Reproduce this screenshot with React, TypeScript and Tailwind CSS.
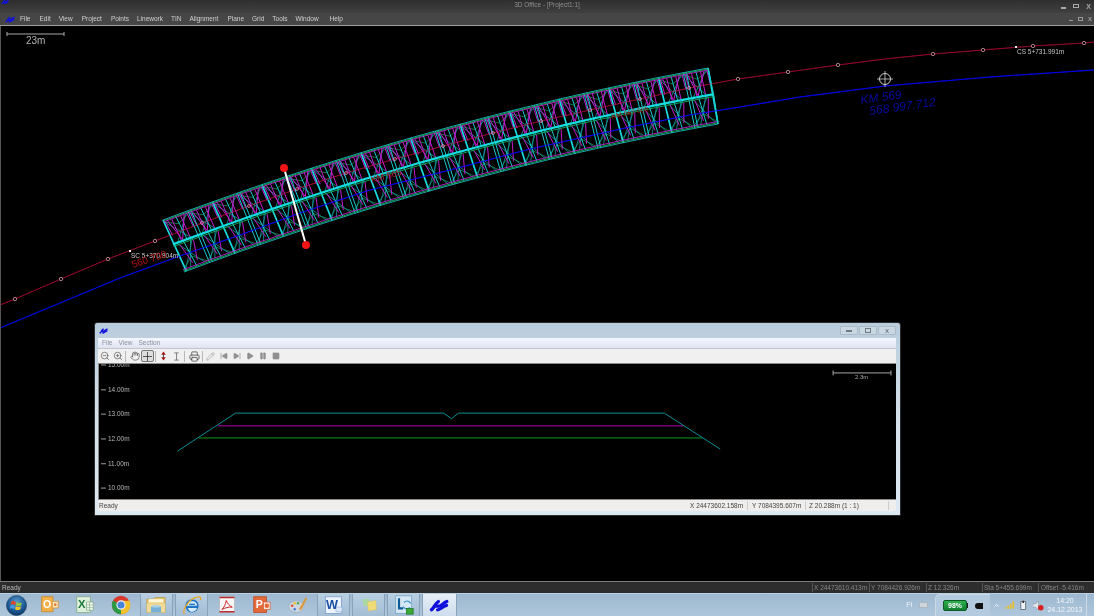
import React from "react";
import { ZoomIn, ZoomOut, Hand, Printer, Pencil, SkipBack, SkipForward, Play, Pause, Square, ChevronUp } from "lucide-react";

type P = [number, number];
const quad = (a: P, c: P, b: P, s: number): P => {
  const u = 1 - s;
  return [u * u * a[0] + 2 * u * s * c[0] + s * s * b[0], u * u * a[1] + 2 * u * s * c[1] + s * s * b[1]];
};
const meshPt = (s: number, t: number): P => {
  const a = quad([163, 220], [435, 118], [708, 68], s);
  const b = quad([184, 272], [451, 172], [718, 124], s);
  return [a[0] + (b[0] - a[0]) * t, a[1] + (b[1] - a[1]) * t];
};
const N = 22;
const SP = 0.47;
const seg = (s1: number, t1: number, s2: number, t2: number) => {
  const a = meshPt(Math.min(s1, N) / N, t1);
  const b = meshPt(Math.min(s2, N) / N, t2);
  return `M${a[0].toFixed(1)} ${a[1].toFixed(1)}L${b[0].toFixed(1)} ${b[1].toFixed(1)}`;
};
const longi = (t: number) => {
  let d = "";
  for (let i = 0; i < N; i++) d += seg(i, t, i + 1, t);
  return d;
};
let major = "", thin = "", diag = "", mg = "", gr = "";
for (let i = 0; i <= N; i++) {
  if (i % 2 === 0) major += seg(i, 0, i + 0.1, 1);
  else thin += seg(i, 0, i + 0.05, 1) + seg(i + 0.12, 0, i + 0.17, 1);
  if (i === N) continue;
  thin += seg(i + 0.5, 0.02, i + 0.58, SP) + seg(i + 0.42, SP, i + 0.55, 0.98);
  diag += seg(i, 0.03, i + 0.75, SP) + seg(i + 0.9, 0.03, i + 0.2, SP);
  diag += seg(i + 0.15, SP, i + 0.9, 0.97) + seg(i + 0.8, SP, i + 0.1, 0.97);
  diag += seg(i + 0.3, 0.97, i + 0.72, SP);
  mg += seg(i + 0.15, 0.04, i + 0.42, SP - 0.02) + seg(i + 0.82, 0.04, i + 0.42, SP - 0.02);
  mg += seg(i + 0.32, 0.04, i + 0.36, SP - 0.02) + seg(i + 0.68, 0.04, i + 0.72, SP - 0.02);
  mg += seg(i + 0.06, 0.04, i + 0.12, 0.32) + seg(i + 0.94, 0.04, i + 0.98, 0.3);
  mg += seg(i + 0.25, SP + 0.05, i + 0.45, 0.9) + seg(i + 0.8, SP + 0.05, i + 0.65, 0.88);
  gr += seg(i, 0.96, i + 0.5, 0.78) + seg(i + 1, 0.96, i + 0.5, 0.78);
  gr += seg(i, 0.04, i + 0.5, 0.16) + seg(i + 1, 0.04, i + 0.5, 0.16);
}
const cyanEdges = [0, 1].map(longi).join("");
const magentaEdges = [0.035, 0.955].map(longi).join("");
const greenEdges = [0.018, SP + 0.04, 0.98].map(longi).join("");
const spine = longi(SP);

const redPts: P[] = [[15, 299], [61, 279], [108, 259], [155, 241], [202, 223], [249, 206], [297, 189], [346, 173], [395, 159], [443, 146], [493, 133], [541, 121], [590, 110], [640, 99], [689, 88], [738, 79], [788, 72], [838, 65], [885, 59], [933, 54], [983, 50], [1033, 46], [1084, 43]];
const redLine = "M0 305L" + redPts.map((p) => p.join(" ")).join("L") + "L1094 42";
const redMarks = redPts.filter((p) => p[0] < 165 || p[0] > 730).filter((p) => p[0] !== 885);
const innerMarks = redPts.filter((p) => p[0] > 200 && p[0] < 700);
const blueLine = "M0 328L60 303L120 278L177 257L240 235L300 213L370 190L450 170L530 149L630 127L690 115L740 107L800 97L885 86L990 77L1094 70";

function Logo({ className = "w-[14px] h-[9px]" }: { className?: string }) {
  return (
    <svg viewBox="0 0 28 18" className={className} fill="none" stroke="#1010dc" strokeWidth="4.6" strokeLinecap="round" strokeLinejoin="round">
      <path d="M3.5 15C7 13 8.5 6 13 3.5" />
      <path d="M9 10H14C17 10 20 5.5 25 3.5" />
      <path d="M12 15C16 15 18.5 10.5 24.5 9" />
    </svg>
  );
}

function Orb() {
  return (
    <svg viewBox="0 0 24 24" className="w-[21px] h-[21px]">
      <defs>
        <radialGradient id="orb" cx="50%" cy="35%" r="70%">
          <stop offset="0" stopColor="#5f9fd2" />
          <stop offset="0.6" stopColor="#1c5a94" />
          <stop offset="1" stopColor="#0b2f5a" />
        </radialGradient>
      </defs>
      <circle cx="12" cy="12" r="11.5" fill="url(#orb)" stroke="#17365a" strokeWidth="0.6" />
      <path d="M6 7.5C8 6.5 9.5 7 11.3 8L10.5 11.6C8.8 10.7 7.2 10.3 5.3 11Z" fill="#e0482a" />
      <path d="M12.2 8.3C14.2 9.3 16 9.5 18 8.6L17.2 12.2C15.2 13 13.2 12.7 11.4 11.9Z" fill="#8fc63f" />
      <path d="M5.1 11.9C7 11.2 8.6 11.6 10.3 12.5L9.5 16.1C7.7 15.2 6.1 14.9 4.3 15.6Z" fill="#3f9be0" />
      <path d="M11.2 12.9C13 13.7 15 13.9 17 13.1L16.2 16.7C14.2 17.5 12.2 17.2 10.4 16.5Z" fill="#f7c325" />
    </svg>
  );
}
function Outlook() {
  return (
    <svg viewBox="0 0 24 24" className="w-[18px] h-[18px]">
      <rect x="1" y="1" width="15" height="20" fill="#f4b14a" stroke="#c9801a" />
      <path d="M15 7H23V16H15Z" fill="#fbe6bd" stroke="#d08a2a" />
      <circle cx="19" cy="11.5" r="1.8" fill="#e87a30" />
      <text x="2.5" y="16.5" fontSize="14" fontWeight="700" fill="#fff" fontFamily="Liberation Sans">O</text>
    </svg>
  );
}
function Excel() {
  return (
    <svg viewBox="0 0 24 24" className="w-[18px] h-[18px]">
      <rect x="1" y="1" width="18" height="21" fill="#dfeedd" stroke="#7da880" />
      <path d="M14 8H23V19H14Z" fill="#f4faf2" stroke="#7da880" />
      <path d="M14 12H23M14 15.5H23M18 8V19" stroke="#7da880" strokeWidth="0.8" />
      <text x="2.5" y="16" fontSize="15" fontWeight="700" fill="#1c7a3a" fontFamily="Liberation Sans">X</text>
    </svg>
  );
}
function Chrome() {
  return (
    <svg viewBox="0 0 24 24" className="w-[20px] h-[20px]">
      <circle cx="12" cy="12" r="11" fill="#d8392c" />
      <path d="M12 12L2.5 6.5A11 11 0 0 0 12 23Z" fill="#2a9a46" />
      <path d="M12 12L12 23A11 11 0 0 0 21.5 6.5Z" fill="#f2c22a" />
      <path d="M12 7H22A11 11 0 0 1 17 21.8L12 12Z" fill="#f2c22a" />
      <circle cx="12" cy="12" r="5.6" fill="#f4f4f4" />
      <circle cx="12" cy="12" r="4.3" fill="#4a84d8" />
    </svg>
  );
}
function Folder() {
  return (
    <svg viewBox="0 0 24 24" className="w-[20px] h-[20px]">
      <path d="M1 5H9L11 3H23V21H1Z" fill="#e0c36c" stroke="#b7953c" strokeWidth="0.8" />
      <rect x="3" y="5" width="18" height="4" fill="#fff6d8" />
      <path d="M1 10H23V21H1Z" fill="#efdb98" />
      <rect x="6" y="14" width="12" height="7" fill="#76b0d8" />
      <rect x="8" y="12" width="8" height="3" fill="#a9d2ea" />
    </svg>
  );
}
function IE() {
  return (
    <svg viewBox="0 0 24 24" className="w-[20px] h-[20px]">
      <circle cx="12" cy="13" r="8" fill="#1f74c4" />
      <path d="M6 13H18C18 9 15.5 7.5 12 7.5C9 7.5 6.5 9.5 6 13Z" fill="#d7ecfb" />
      <rect x="8.6" y="10.4" width="7" height="1.6" fill="#1f74c4" />
      <path d="M7 15.5H18C17 19 14 20.5 11 20C9 19.5 7.5 17.5 7 15.5Z" fill="#d7ecfb" />
      <path d="M3 22C0 20 6 8 14 4C19 1.5 24 1 22 6" fill="none" stroke="#e8a820" strokeWidth="1.6" />
    </svg>
  );
}
function Acrobat() {
  return (
    <svg viewBox="0 0 24 24" className="w-[18px] h-[18px]">
      <rect x="2" y="1" width="20" height="21" fill="#f6f6f6" stroke="#b6b6b6" />
      <rect x="2" y="1" width="20" height="2" fill="#b92a2e" />
      <rect x="2" y="20" width="20" height="2" fill="#b92a2e" />
      <path d="M11 6C10 11 8 16 5 18C9 16 15 14 19 15C15 13 12 9 11 6Z" fill="none" stroke="#d02028" strokeWidth="1.3" />
    </svg>
  );
}
function Ppt() {
  return (
    <svg viewBox="0 0 24 24" className="w-[18px] h-[18px]">
      <rect x="1" y="1" width="17" height="21" fill="#e4693a" stroke="#b5471c" />
      <path d="M14 8H23V18H14Z" fill="#fbe3d6" stroke="#c96a40" />
      <circle cx="18.5" cy="13" r="3" fill="#e4693a" />
      <text x="3.5" y="16.5" fontSize="14" fontWeight="700" fill="#fff" fontFamily="Liberation Sans">P</text>
    </svg>
  );
}
function Palette() {
  return (
    <svg viewBox="0 0 24 24" className="w-[20px] h-[20px]">
      <ellipse cx="10" cy="14" rx="9" ry="7" fill="#cdd6de" stroke="#93a0ad" strokeWidth="0.6" />
      <circle cx="5" cy="13" r="1.5" fill="#e8483a" />
      <circle cx="8" cy="10" r="1.5" fill="#f0c030" />
      <circle cx="12" cy="10" r="1.5" fill="#4aa84a" />
      <circle cx="8" cy="17" r="1.5" fill="#3c7cd8" />
      <path d="M13 17L21 3L23 4L16 18Z" fill="#d89a40" />
    </svg>
  );
}
function Word() {
  return (
    <svg viewBox="0 0 24 24" className="w-[19px] h-[19px]">
      <rect x="2" y="1" width="20" height="21" fill="#eef4fb" stroke="#7e9dc9" />
      <path d="M15 14H23V20H15Z" fill="#dbe7f6" stroke="#7e9dc9" strokeWidth="0.6" />
      <text x="2.6" y="17" fontSize="16" fontWeight="700" fill="#1c4fa8" fontFamily="Liberation Sans">W</text>
    </svg>
  );
}
function Sticky() {
  return (
    <svg viewBox="0 0 24 24" className="w-[18px] h-[18px]">
      <path d="M3 5L12 3L14 12L5 14Z" fill="#a9d9a5" />
      <path d="M10 8L21 6L22 18L11 20Z" fill="#efdc78" stroke="#dcbf50" strokeWidth="0.5" />
    </svg>
  );
}
function Lync() {
  return (
    <svg viewBox="0 0 24 24" className="w-[20px] h-[20px]">
      <rect x="2" y="1" width="19" height="21" fill="#d6e8f5" stroke="#7ea4c4" />
      <path d="M6 4V16H11" fill="none" stroke="#0e5c96" strokeWidth="2.6" />
      <path d="M12 9C15 6 18 7 20 10M19 15C16 18 13 17 11 14" fill="none" stroke="#2f8fcc" strokeWidth="1.4" />
      <rect x="15" y="16" width="8" height="7" fill="#38a838" stroke="#1c6c1c" strokeWidth="0.8" />
    </svg>
  );
}

const tb = "flex items-center justify-center w-[35.4px] h-full";
const act = "flex items-center justify-center w-[33px] h-full border-x border-[#8aa2b9] bg-gradient-to-b from-[#b8cfe2] to-[#a3bdd4]";

function Ctl({ children }: { children: React.ReactNode }) {
  return <div className="w-[18px] h-[9px] border border-[#a9b9c8] rounded-[1px] flex items-center justify-center bg-[#c9d7e3]">{children}</div>;
}

const T = "flex items-center justify-center w-[13px] h-[13px]";
const Sep = () => <div className="w-px h-[11px] bg-[#b8b8b8] mx-[1px]" />;

export default function App() {
  return (
    <div className="w-[1094px] h-[616px] flex flex-col overflow-hidden bg-black blur-[0.3px] font-['Liberation_Sans',sans-serif]">
      {/* Title bar */}
      <div className="h-[13px] relative flex items-center justify-between bg-gradient-to-b from-[#2e2e2e] to-[#404040] shrink-0">
        <Logo className="w-[8px] h-[6px] -mt-[9px] ml-[1px]" />
        <div className="absolute left-0 right-0 text-center text-[6.5px] leading-[13px] text-[#8f8f8f] -mt-[4px]">3D Office - [Project1:1]</div>
        <div className="flex items-center gap-[7px] pr-[3px] text-[#a8a8a8]">
          <div className="w-[5px] h-[1.5px] bg-[#a8a8a8] mt-[3px]" />
          <div className="w-[6px] h-[4px] border border-[#a8a8a8] -mt-[1px]" />
          <div className="text-[7px] leading-none font-bold -mt-[1px]">X</div>
        </div>
      </div>
      {/* Menu bar */}
      <div className="h-[13px] flex items-center justify-between bg-[#464646] border-b border-[#a0a0a0] shrink-0">
        <div className="flex items-center text-[6.5px] text-[#d0d0d0] pl-[5px]">
          <Logo className="w-[10px] h-[7px] mr-[5px]" />
          <span className="mr-[9px]">File</span>
          <span className="mr-[8px]">Edit</span>
          <span className="mr-[9px]">View</span>
          <span className="mr-[9px]">Project</span>
          <span className="mr-[8px]">Points</span>
          <span className="mr-[8px]">Linework</span>
          <span className="mr-[8px]">TIN</span>
          <span className="mr-[9px]">Alignment</span>
          <span className="mr-[8px]">Plane</span>
          <span className="mr-[8px]">Grid</span>
          <span className="mr-[8px]">Tools</span>
          <span className="mr-[11px]">Window</span>
          <span>Help</span>
        </div>
        <div className="flex items-center gap-[5px] pr-[2px]">
          <div className="w-[4px] h-[1px] bg-[#9a9a9a] mt-[3px]" />
          <div className="w-[5px] h-[4px] border border-[#9a9a9a]" />
          <div className="text-[6px] leading-none font-bold text-[#a0a0a0]">X</div>
        </div>
      </div>
      {/* Canvas */}
      <div className="relative flex-1 bg-black border-l border-[#555] min-h-0">
        <svg viewBox="1 26 1093 555" className="w-full h-full block" preserveAspectRatio="none" fontFamily="Liberation Sans">
          {/* scale */}
          <path d="M7 34H64M7 32V36M64 32V36" stroke="#a8a8a8" strokeWidth="1" fill="none" />
          <text x="26" y="44" fontSize="10" fill="#b4b4b4">23m</text>
          {/* alignment */}
          <path d={blueLine} stroke="#0000c8" strokeWidth="1" fill="none" />
          <path d={redLine} stroke="#7a0018" strokeWidth="1" fill="none" />
          {/* mesh */}
          <path d={gr} stroke="#10905a" strokeWidth="0.8" fill="none" />
          <path d={diag} stroke="#129ca0" strokeWidth="0.8" fill="none" />
          <path d={mg} stroke="#c41ccc" strokeWidth="1" fill="none" />
          <path d={thin} stroke="#14ccd0" strokeWidth="1" fill="none" />
          <path d={major} stroke="#16dce0" strokeWidth="1.7" fill="none" />
          <path d={cyanEdges} stroke="#18d0d0" strokeWidth="0.8" fill="none" />
          <path d={magentaEdges} stroke="#c41ccc" strokeWidth="0.9" fill="none" />
          <path d={greenEdges} stroke="#14b060" strokeWidth="0.9" fill="none" />
          <path d={spine} stroke="#14dde0" strokeWidth="2.2" fill="none" />
          <path d="M708 68L714 97L718 124" stroke="#18d0d0" strokeWidth="1.2" fill="none" />
          <path d={blueLine} stroke="#0000e8" strokeWidth="1" fill="none" opacity="0.85" />
          <path d={redLine} stroke="#a01040" strokeWidth="0.8" fill="none" opacity="0.7" />
          {redMarks.map((p) => (
            <circle key={p[0]} cx={p[0]} cy={p[1]} r="1.7" fill="#000" stroke="#d09aa8" strokeWidth="0.8" />
          ))}
          {innerMarks.map((p) => (
            <circle key={p[0]} cx={p[0]} cy={p[1]} r="1.5" fill="none" stroke="#e0a8c8" strokeWidth="0.7" />
          ))}
          <rect x="129" y="250" width="2" height="2" fill="#eee" />
          <rect x="1015" y="46" width="2" height="2" fill="#eee" />
          {/* labels */}
          <text x="131" y="258" fontSize="6.5" fill="#c8c8c8">SC 5+370.804m</text>
          <text x="1017" y="54" fontSize="6.5" fill="#c8c8c8">CS 5+731.991m</text>
          <text x="133" y="268" fontSize="10" fill="#b01010" transform="rotate(-18 133 268)">560 700</text>
          <text x="372" y="183" fontSize="9" fill="#b01030" transform="rotate(-15 372 183)">KM 565</text>
          <text x="612" y="119" fontSize="7" fill="#b01010" transform="rotate(-12 612 119)">KM 567 000</text>
          <text x="861" y="104" fontSize="12" fontStyle="italic" fill="#0a0aa0" transform="rotate(-8 861 104)">KM 569</text>
          <text x="870" y="115" fontSize="12" fontStyle="italic" fill="#0a0aa0" transform="rotate(-8 870 115)">568 997.712</text>
          {/* crosshair */}
          <circle cx="885" cy="79" r="5.5" stroke="#d0d0d0" strokeWidth="1" fill="none" />
          <path d="M885 71V87M877 79H893" stroke="#d0d0d0" strokeWidth="0.8" />
          {/* section handle */}
          <path d="M284 168L306 245" stroke="#ffffff" strokeWidth="2" />
          <circle cx="284" cy="168" r="4" fill="#f01414" />
          <circle cx="306" cy="245" r="4" fill="#f01414" />
        </svg>

        {/* Floating section window */}
        <div className="absolute left-[93px] top-[296px] w-[807px] h-[194px] flex flex-col border border-[#2c2c2c] rounded-t-[3px] bg-gradient-to-b from-[#b9ccdc] via-[#d5e1eb] to-[#dce8f3] pl-[3px] pr-[4px] pb-[4px]">
          <div className="h-[15px] flex items-center justify-between shrink-0">
            <Logo className="w-[9px] h-[6px] ml-[1px]" />
            <div className="flex gap-[1px]">
              <Ctl><div className="w-[6px] h-[2px] bg-[#707a84]" /></Ctl>
              <Ctl><div className="w-[6px] h-[5px] border border-[#707a84]" /></Ctl>
              <Ctl><div className="text-[6px] leading-none font-bold text-[#707a84]">X</div></Ctl>
            </div>
          </div>
          <div className="h-[11px] flex items-center gap-[6px] pl-[4px] bg-gradient-to-b from-[#f5f7fd] to-[#dfe3f3] border-b border-[#c4c6cc] text-[6.5px] text-[#8c8fa0] shrink-0">
            <span>File</span>
            <span>View</span>
            <span>Section</span>
          </div>
          <div className="h-[15px] flex items-center bg-[#f0f0f0] shrink-0 border-b border-[#8a8a8a] text-[#4a4a4a]">
            <div className={T}><ZoomOut size={10} strokeWidth={1.5} /></div>
            <div className={T}><ZoomIn size={10} strokeWidth={1.5} /></div>
            <Sep />
            <div className={T + " ml-[1px]"}><Hand size={10} strokeWidth={1.5} /></div>
            <div className="flex items-center justify-center w-[13px] h-[12px] border border-[#777] rounded-[2px] bg-[#dedede]">
              <svg viewBox="0 0 10 10" className="w-[9px] h-[9px]"><path d="M5 0V10M0 5H10" stroke="#333" strokeWidth="0.9" /></svg>
            </div>
            <Sep />
            <div className={T}>
              <svg viewBox="0 0 10 10" className="w-[9px] h-[10px]"><path d="M5 1V9" stroke="#444" /><path d="M5 0L2.5 3.5H7.5ZM5 10L2.5 6.5H7.5Z" fill="#a01818" /></svg>
            </div>
            <div className={T}>
              <svg viewBox="0 0 10 10" className="w-[9px] h-[9px]"><path d="M2.5 1H7.5M5 1V9M2.5 9H7.5" stroke="#777" fill="none" /></svg>
            </div>
            <Sep />
            <div className={T + " ml-[2px]"}><Printer size={11} strokeWidth={1.7} /></div>
            <Sep />
            <div className="flex items-center text-[#a8a8a8]">
              <div className={T}><Pencil size={9} /></div>
              <div className={T}><SkipBack size={8} fill="#909090" className="text-[#909090]" /></div>
              <div className={T}><SkipForward size={8} fill="#909090" className="text-[#909090]" /></div>
              <div className={T}><Play size={8} fill="#909090" className="text-[#909090]" /></div>
              <div className={T}><Pause size={8} fill="#909090" className="text-[#909090]" /></div>
              <div className={T}><Square size={8} fill="#909090" className="text-[#909090]" /></div>
            </div>
          </div>
          <div className="flex-1 min-h-0 bg-black border-l border-b border-[#8a8a8a]">
            <svg viewBox="98 364 798 136" className="w-full h-full block" preserveAspectRatio="none" fontFamily="Liberation Sans">
              {[["14.00m", 390], ["13.00m", 414.5], ["12.00m", 439.5], ["11.00m", 464.5], ["10.00m", 489]].map(([l, y]) => (
                <g key={l as string}>
                  <path d={`M100 ${y}H105`} stroke="#a0a0a0" strokeWidth="1" />
                  <text x="107" y={(y as number) + 2.2} fontSize="6.5" fill="#b8b8b8">{l}</text>
                </g>
              ))}
              <path d="M100 365H105" stroke="#a0a0a0" strokeWidth="1" />
              <text x="107" y="367.5" fontSize="6.5" fill="#b8b8b8">15.00m</text>
              <path d="M198 438.5H702" stroke="#009a1a" strokeWidth="1" fill="none" />
              <path d="M216.7 426.3H683" stroke="#b000b0" strokeWidth="1" fill="none" />
              <path d="M176.7 451.7L234.7 413.5H443L451 419L458 413.5H664L720 449.7" stroke="#0a8f94" strokeWidth="1" fill="none" />
              <path d="M833 373H891M833 370.5V375.5M891 370.5V375.5" stroke="#a8a8a8" strokeWidth="1" fill="none" />
              <text x="855" y="379" fontSize="6" fill="#a8a8a8">2.3m</text>
            </svg>
          </div>
          <div className="h-[11px] flex items-center bg-[#f0eeec] text-[6.5px] text-[#444] shrink-0 pl-[1px]">
            <span className="w-[591px]">Ready</span>
            <span className="w-[58px] border-r border-[#ccc]">X 24473602.158m</span>
            <span className="w-[58px] pl-[4px] border-r border-[#ccc]">Y 7084395.607m</span>
            <span className="w-[83px] pl-[3px] border-r border-[#ccc]">Z 20.288m (1 : 1)</span>
          </div>
        </div>
      </div>
      {/* Main status bar */}
      <div className="h-[12px] flex items-center justify-between bg-[#2d2d2d] border-t border-[#7c7c7c] text-[6.5px] text-[#b8b8b8] shrink-0">
        <span className="pl-[2px]">Ready</span>
        <div className="flex text-[#858585]">
          <span className="w-[57px] pl-[1px] border-l border-[#555]">X 24473610.413m</span>
          <span className="w-[57px] pl-[1px] border-l border-[#555]">Y 7084426.926m</span>
          <span className="w-[56px] pl-[1px] border-l border-[#555]">Z 12.326m</span>
          <span className="w-[56px] pl-[1px] border-l border-[#555]">Sta 5+455.699m</span>
          <span className="w-[56px] pl-[2px] border-l border-[#555]">Offset -5.416m</span>
        </div>
      </div>
      {/* Taskbar */}
      <div className="h-[23px] flex items-center justify-between bg-gradient-to-b from-[#9db8d0] to-[#afc7db] border-t border-[#bccfdf] shrink-0">
        <div className="flex items-center h-full">
          <div className="w-[32.3px] h-full flex items-center justify-center"><Orb /></div>
          <div className={tb}><Outlook /></div>
          <div className={tb}><Excel /></div>
          <div className={tb}><Chrome /></div>
          <div className={tb}><div className={act}><Folder /></div></div>
          <div className={tb}><div className={act}><IE /></div></div>
          <div className={tb}><Acrobat /></div>
          <div className={tb}><Ppt /></div>
          <div className={tb}><Palette /></div>
          <div className={tb}><div className={act}><Word /></div></div>
          <div className={tb}><div className={act}><Sticky /></div></div>
          <div className={tb}><div className={act}><Lync /></div></div>
          <div className={tb}>
            <div className="flex items-center justify-center w-[35px] h-full bg-gradient-to-b from-[#e6eef6] to-[#cddded] border-x border-[#8ba3ba]"><Logo className="w-[20px] h-[13px]" /></div>
          </div>
        </div>
        <div className="flex items-center h-full">
          <span className="text-[7px] text-[#eef3f8] mr-[6px]">FI</span>
          <div className="w-[9px] h-[6px] bg-[#cdd6dd] rounded-[1px] border border-[#aab5bf] mr-[7.5px]" />
          <div className="h-full w-[55px] flex items-center pl-[7px] bg-[#b4cbdf] rounded-tl-[5px] border-l border-t border-[#c9d9e7]">
            <div className="w-[24px] h-[11px] rounded-[2px] bg-gradient-to-b from-[#2fb050] to-[#0f8030] border border-[#0b5c24] text-[7px] leading-[9px] font-bold text-white text-center">98%</div>
            <div className="w-[1px] h-[5px] bg-[#222]" />
            <div className="w-[8px] h-[6px] ml-[7px] rounded-l-[3px] bg-[#111]" />
          </div>
          <ChevronUp size={7} className="text-white ml-[2.5px]" strokeWidth={3} />
          <svg viewBox="0 0 12 10" className="w-[10px] h-[9px] ml-[5.5px]"><path d="M0 9H2V7H0ZM3 9H5V5H3ZM6 9H8V3H6ZM9 9H11V0H9Z" fill="#e8c030" /></svg>
          <svg viewBox="0 0 10 12" className="w-[8px] h-[11px] ml-[5px]"><path d="M1 1H7V11H1Z" fill="#eef3f7" stroke="#55606a" /><path d="M3 0H5V3H3Z" fill="#333" /></svg>
          <svg viewBox="0 0 12 12" className="w-[11px] h-[11px] ml-[5px]"><path d="M0 4H3L6 1V11L3 8H0Z" fill="#dfe6ec" stroke="#77818a" strokeWidth="0.5" /><circle cx="8.5" cy="8.5" r="3" fill="#d82020" /></svg>
          <div className="w-[42px] flex flex-col items-center text-[7px] leading-[9.5px] text-[#f4f7fa]">
            <span>14:20</span>
            <span>24.12.2013</span>
          </div>
          <div className="w-[8px] h-full border-l border-[#cfdce8]" />
        </div>
      </div>
    </div>
  );
}
